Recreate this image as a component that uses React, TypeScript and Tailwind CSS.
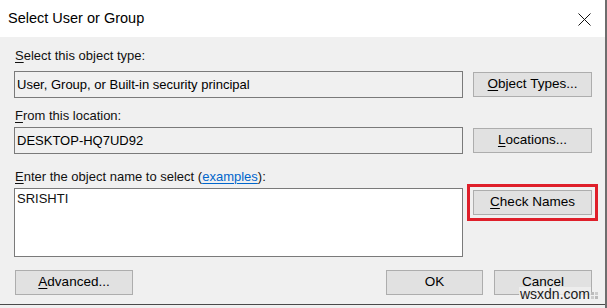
import React from 'react'

function AccessKey({ text, keyIndex = 0 }: { text: string; keyIndex?: number }) {
  return (
    <>
      {text.slice(0, keyIndex)}
      <span className="underline underline-offset-[2px]">{text[keyIndex]}</span>
      {text.slice(keyIndex + 1)}
    </>
  )
}

function DialogButton({ children, className = '' }: { children: React.ReactNode; className?: string }) {
  return (
    <button
      type="button"
      className={`flex h-[25px] items-center justify-center border border-[#adadad] bg-[#e1e1e1] text-[13.5px] text-black ${className}`}
    >
      {children}
    </button>
  )
}

function ReadonlyField({ value }: { value: string }) {
  return (
    <div className="flex h-[27px] w-[449px] items-center border border-[#7a7a7a] bg-[#f0f0f0] pl-[2px] text-[13px] text-black">
      {value}
    </div>
  )
}

export default function App() {
  return (
    <div
      className="relative flex h-[308px] w-[607px] flex-col overflow-hidden border-r-[2px] border-[#6e6e6e] bg-[#f0f0f0]"
      style={{ fontFamily: '"Liberation Sans", Arial, sans-serif' }}
    >
      <div className="flex h-[37px] shrink-0 items-center justify-between bg-white pl-[8px] pr-[14px]">
        <span className="text-[14.5px] text-black">Select User or Group</span>
        <svg width="13" height="13" viewBox="0 0 13 13" className="mt-[1px]">
          <path d="M0.5 0.5 L12.5 12.5 M12.5 0.5 L0.5 12.5" stroke="#111" strokeWidth="1" fill="none" />
        </svg>
      </div>

      <div className="flex flex-col pl-[14px] text-[13px] text-[#111]">
        <div className="mt-[11px] h-[15px] leading-[15px] pl-px">
          <AccessKey text="Select this object type:" />
        </div>
        <div className="mt-[8px] flex items-center gap-[10px]">
          <ReadonlyField value="User, Group, or Built-in security principal" />
          <DialogButton className="w-[119px]">
            <AccessKey text="Object Types..." />
          </DialogButton>
        </div>

        <div className="mt-[10px] h-[15px] leading-[15px] pl-px">
          <AccessKey text="From this location:" />
        </div>
        <div className="mt-[4px] flex items-center gap-[10px]">
          <ReadonlyField value="DESKTOP-HQ7UD92" />
          <DialogButton className="w-[119px]">
            <AccessKey text="Locations..." />
          </DialogButton>
        </div>

        <div className="mt-[15px] h-[15px] leading-[15px] pl-px">
          <AccessKey text="Enter the object name to select " />(
          <span className="text-[#0066cc] underline underline-offset-[2px]">examples</span>):
        </div>
        <div className="mt-[4px] flex items-start gap-[10px]">
          <div className="h-[69px] w-[449px] border border-[#7a7a7a] bg-white pl-[2px] pt-[2px] leading-[15px]">
            SRISHTI
          </div>
          <DialogButton className="mt-[2px] w-[119px] outline-[3px] outline-offset-[3px] outline-[#df1f2a] outline-solid">
            <AccessKey text="Check Names" />
          </DialogButton>
        </div>

        <div className="mt-[13px] flex items-center">
          <DialogButton className="ml-px w-[118px]">
            <AccessKey text="Advanced..." />
          </DialogButton>
          <DialogButton className="ml-auto w-[97px]">OK</DialogButton>
          <DialogButton className="ml-[11px] mr-[13px] w-[98px]">Cancel</DialogButton>
        </div>
      </div>

      <div className="absolute bottom-[3px] left-0 right-0 h-px bg-[#4a4a4a]" />

      <div className="absolute bottom-[7px] right-[6px] flex items-end">
        <span className="bg-[#f0f0f0]/80 px-[1px] text-[14px] leading-[14px] text-[#1a1a1a]">wsxdn.com</span>
        <svg width="8" height="8" viewBox="0 0 8 8" className="mb-px">
          <rect x="0" y="0" width="3" height="3" fill="#bbb" />
          <rect x="4" y="0" width="3" height="3" fill="#ccc" />
          <rect x="0" y="4" width="3" height="3" fill="#ccc" />
          <rect x="4" y="4" width="3" height="3" fill="#bbb" />
        </svg>
      </div>
    </div>
  )
}
